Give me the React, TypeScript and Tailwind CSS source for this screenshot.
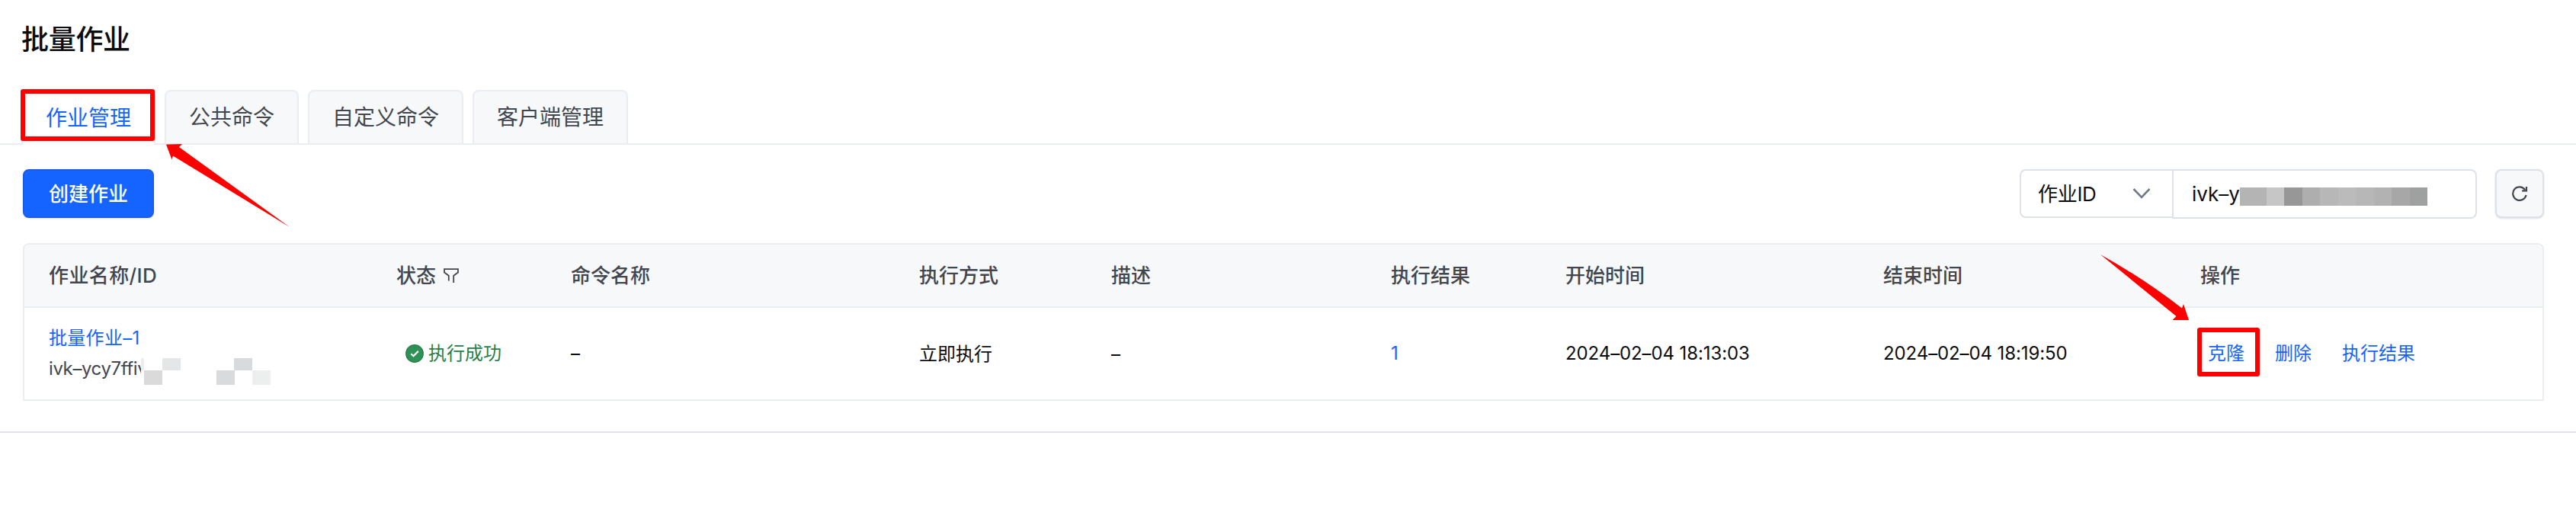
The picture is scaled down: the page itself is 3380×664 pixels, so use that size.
import { useState } from "react";

type Job = {
  id: string;
  name: string;
  status: string;
  command: string;
  mode: string;
  description: string;
  result: number;
  startedAt: string;
  endedAt: string;
};

const TABS = ["作业管理", "公共命令", "自定义命令", "客户端管理"];

const JOBS: Job[] = [
  {
    id: "ivk–ycy7ffiv",
    name: "批量作业–1",
    status: "执行成功",
    command: "–",
    mode: "立即执行",
    description: "–",
    result: 1,
    startedAt: "2024–02–04 18:13:03",
    endedAt: "2024–02–04 18:19:50",
  },
];

const ROW = "grid grid-cols-[456px_229px_457px_252px_367px_229px_417px_416px_1fr] items-center pl-8";

function FilterIcon() {
  return (
    <svg width="20" height="20" viewBox="0 0 20 20" fill="none" stroke="#42464e" strokeWidth="1.8" className="ml-2.5">
      <path d="M6.8 16.5V9.8L1 5.5V1.2H19V5.5L13.2 9.8V19" />
    </svg>
  );
}

function SuccessIcon() {
  return (
    <svg width="24" height="24" viewBox="0 0 24 24" fill="none">
      <circle cx="12" cy="12" r="11.2" fill="#2f9158" stroke="#268048" strokeWidth="1.4" />
      <path d="M7.3 12.2L10.5 15.2L16.8 8.9" stroke="#fff" strokeWidth="2.2" />
    </svg>
  );
}

function RefreshIcon() {
  return (
    <svg width="22" height="22" viewBox="0 0 22 22" fill="none" stroke="#42464e" strokeWidth="2.2">
      <path d="M19.6 13A8.8 8.8 0 1 1 18.2 6" />
      <path d="M20 2V7.4H14.2" />
    </svg>
  );
}

function SearchBar() {
  return (
    <div className="flex items-start">
      <button className="flex h-16 w-[200px] items-center justify-between rounded-l-lg border-2 border-r-0 border-[#dde2e9] pl-[22px] pr-7">
        <span className="text-[26px] tracking-[-0.3px] text-[#0c0d0e]">作业ID</span>
        <svg width="24" height="16" viewBox="0 0 24 16" fill="none" stroke="#737a87" strokeWidth="2.6">
          <path d="M1.5 2L12 12.8L22.5 2" />
        </svg>
      </button>
      <div className="relative flex h-[65px] w-[400px] items-center rounded-r-lg border-2 border-[#dde2e9] pl-6 text-[26px]">
        <span className="text-[#0c0d0e]">ivk–y</span>
        <div className="absolute left-[87px] top-[22px] flex h-6">
          <i className="w-[35px] bg-[#b4b4b4]" />
          <i className="w-[23px] bg-[#c6c6c6]" />
          <i className="w-6 bg-[#979797]" />
          <i className="w-[23px] bg-[#aeaeae]" />
          <i className="w-6 bg-[#b7b7b7]" />
          <i className="w-[23px] bg-[#bbbbbb]" />
          <i className="w-6 bg-[#b7b7b7]" />
          <i className="w-[23px] bg-[#b2b2b2]" />
          <i className="w-6 bg-[#a7a7a7]" />
          <i className="w-[23px] bg-[#9fa1a0]" />
        </div>
      </div>
      <button className="ml-6 flex size-16 items-center justify-center rounded-lg border-2 border-[#dde2e9] bg-[#f6f8fa] shadow-sm">
        <RefreshIcon />
      </button>
    </div>
  );
}

function JobRow({ job }: { job: Job }) {
  return (
    <div className={`${ROW} h-[122px] border-b-2 border-[#eaedf1] text-2xl text-[#0c0d0e]`}>
      <div className="relative">
        <div className="leading-10 tracking-[0.3px] text-[#1664ff]">{job.name}</div>
        <div className="whitespace-nowrap leading-10 tracking-[-0.4px] text-[#42464e]">{job.id}</div>
        {/* masked part of the id */}
        <i className="absolute left-[121px] top-[42px] h-9 w-10 bg-white" />
        <i className="absolute left-[121px] top-[46px] h-4 w-1 bg-[#eeeeee]" />
        <i className="absolute left-[149px] top-[46px] h-4 w-6 bg-[#e5e6e8]" />
        <i className="absolute left-[125px] top-[62px] h-[19px] w-6 bg-[#dadada]" />
        <i className="absolute left-[220px] top-[62px] h-[19px] w-6 bg-[#d9dadc]" />
        <i className="absolute left-[243px] top-[46px] h-4 w-6 bg-[#d9dadc]" />
        <i className="absolute left-[267px] top-[62px] h-[19px] w-6 bg-[#ecefee]" />
      </div>
      <div className="flex items-center gap-1.5 pl-3 text-[#268048]">
        <SuccessIcon />
        {job.status}
      </div>
      <div>{job.command}</div>
      <div className="pt-0.5">{job.mode}</div>
      <div className="pt-0.5">{job.description}</div>
      <div className="text-[#1664ff]">{job.result}</div>
      <div className="tracking-[-0.1px]">{job.startedAt}</div>
      <div className="tracking-[-0.1px]">{job.endedAt}</div>
      <div className="flex gap-10 pl-2.5 text-[#1664ff]">
        <span className="relative">
          克隆
          <span className="absolute -left-3.5 -top-[18px] h-16 w-[82px] rounded-[3px] border-[6px] border-[#ff0000]" />
          <svg
            width="116"
            height="86"
            viewBox="0 0 116 86"
            className="absolute -left-[141px] -top-[114px]"
          >
            <path d="M0 0Q56 31 107 70.5L109 65L116 86H94.5L99.5 81Z" fill="#ff0000" />
          </svg>
        </span>
        <span>删除</span>
        <span>执行结果</span>
      </div>
    </div>
  );
}

export default function App() {
  const [active, setActive] = useState(0);

  return (
    <div className="h-[664px] w-[3380px] overflow-hidden bg-white font-['Inter','Noto_Sans_CJK_SC',sans-serif]">
      <div className="h-[568px] border-b-2 border-[#e3e4ea]">
        <h1 className="pl-7 pt-[26px] text-4xl font-medium leading-[52px] tracking-[-0.3px] text-[#0c0d0e]">
          批量作业
        </h1>

        {/* Tabs */}
        <div className="mt-10 flex h-[72px]">
          <div className="w-7 border-b-2 border-[#eaedf1]" />
          {TABS.map((tab, i) => (
            <div key={tab} className="flex">
              <button
                onClick={() => setActive(i)}
                className={
                  i === active
                    ? "relative rounded-t-lg border-2 border-b-0 border-[#eaedf1] border-t-[#1664ff] px-[30px] text-[28px] text-[#1664ff]"
                    : "rounded-t-lg border-2 border-[#eaedf1] bg-[#f6f8fa] px-[30px] text-[28px] text-[#42464e]"
                }
              >
                {tab}
                {i === 0 && (
                  <>
                    <span className="absolute -left-[3px] -top-[3px] h-[68px] w-[176px] rounded-[3px] border-[6px] border-[#ff0000]" />
                    <svg
                      width="162"
                      height="109"
                      viewBox="0 0 162 109"
                      className="absolute left-[188px] top-[69px] z-10"
                    >
                      <path d="M0 0.5L21 0L17 4L162 109L9 15.5L7.5 20.5Z" fill="#ff0000" />
                    </svg>
                  </>
                )}
              </button>
              {i < TABS.length - 1 && <div className="w-3 border-b-2 border-[#eaedf1]" />}
            </div>
          ))}
          <div className="flex-1 border-b-2 border-[#eaedf1]" />
        </div>

        {/* Toolbar */}
        <div className="mt-8 flex h-[65px] items-start justify-between pl-[30px] pr-[42px]">
          <button className="h-16 w-[172px] rounded-lg border-2 border-[#1a5ce6] bg-[#1664ff] text-[26px] font-medium text-white shadow-sm">
            创建作业
          </button>
          <SearchBar />
        </div>

        {/* Job table */}
        <div className="ml-[30px] mr-[42px] mt-8 rounded-t-lg border-x-2 border-t-2 border-[#eaedf1]">
          <div
            className={`${ROW} h-[83px] rounded-t-md border-b-2 border-[#eaedf1] bg-[#f6f8fa] text-[26px] font-medium text-[#42464e]`}
          >
            <div className="tracking-[0.4px]">作业名称/ID</div>
            <div className="flex items-center">
              状态
              <FilterIcon />
            </div>
            <div>命令名称</div>
            <div>执行方式</div>
            <div>描述</div>
            <div>执行结果</div>
            <div>开始时间</div>
            <div>结束时间</div>
            <div>操作</div>
          </div>
          {JOBS.map((job) => (
            <JobRow key={job.id} job={job} />
          ))}
        </div>
      </div>
    </div>
  );
}
